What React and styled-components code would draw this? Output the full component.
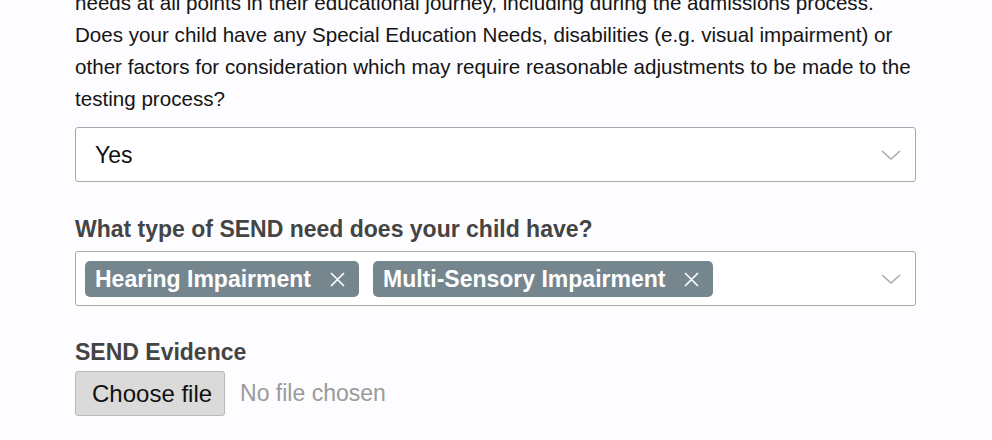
import React from "react";
import styled, { createGlobalStyle } from "styled-components";

const Global = createGlobalStyle`
  html, body {
    margin: 0;
    padding: 0;
    background: #fdfcfe;
    overflow: hidden;
  }
  body {
    font-family: "Liberation Sans", Arial, sans-serif;
    color: #111;
  }
`;

const Form = styled.div`
  width: 841px;
  margin-left: 75px;
  margin-top: -13px;
  display: flex;
  flex-direction: column;
`;

const Intro = styled.p`
  margin: 0;
  font-size: 20.6px;
  line-height: 32px;
  color: #151515;
  white-space: nowrap;
`;

const Field = styled.div`
  margin-top: ${(p) => p.$gap || 0}px;
  display: flex;
  flex-direction: column;
`;

const Label = styled.div`
  font-size: 23px;
  font-weight: bold;
  line-height: 28px;
  color: #444;
  margin-bottom: ${(p) => p.$space || 8}px;
`;

const Box = styled.div`
  height: 55px;
  box-sizing: border-box;
  border: 1px solid #a9a9ab;
  border-radius: 3px;
  background: #fff;
  display: flex;
  align-items: center;
  padding: 1px 14px 0 ${(p) => (p.$chips ? 9 : 19)}px;
  gap: 13px;
`;

const Value = styled.span`
  flex: 1;
  font-size: 23px;
  color: #111;
`;

const Chips = styled.div`
  flex: 1;
  display: flex;
  gap: 14px;
`;

const Chip = styled.span`
  height: 36px;
  display: inline-flex;
  align-items: center;
  background: #76868f;
  color: #fff;
  border-radius: 5px;
  padding: 1px 14px 0 10px;
  box-sizing: border-box;
  font-size: 23px;
  font-weight: bold;
  gap: 19px;
`;

const Chevron = () => (
  <svg width="20" height="10" viewBox="0 0 20 10" fill="none">
    <path d="M1 1l9 8 9-8" stroke="#a8a8ad" strokeWidth="1.5" />
  </svg>
);

const Cross = () => (
  <svg width="15" height="15" viewBox="0 0 15 15" fill="none">
    <path d="M1 1l13 13M14 1L1 14" stroke="#fff" strokeWidth="1.6" />
  </svg>
);

const FileRow = styled.div`
  display: flex;
  align-items: center;
  gap: 15px;
`;

const FileButton = styled.button`
  height: 45px;
  padding: 0 12px 0 16px;
  background: #dadada;
  border: 1px solid #b8b8b8;
  border-radius: 3px;
  font-family: "Liberation Sans", Arial, sans-serif;
  font-size: 24px;
  color: #111;
`;

const NoFile = styled.span`
  font-size: 23px;
  color: #9a9a9a;
`;

export default function App() {
  return (
    <>
      <Global />
      <Form>
        <Intro>
          needs at all points in their educational journey, including during
          the admissions process.
          <br />
          Does your child have any Special Education Needs, disabilities (e.g.
          visual impairment) or
          <br />
          other factors for consideration which may require reasonable
          adjustments to be made to the
          <br />
          testing process?
        </Intro>
        <Field $gap={12}>
          <Box>
            <Value>Yes</Value>
            <Chevron />
          </Box>
        </Field>
        <Field $gap={33}>
          <Label>What type of SEND need does your child have?</Label>
          <Box $chips>
            <Chips>
              <Chip>
                Hearing Impairment <Cross />
              </Chip>
              <Chip>
                Multi-Sensory Impairment <Cross />
              </Chip>
            </Chips>
            <Chevron />
          </Box>
        </Field>
        <Field $gap={32}>
          <Label $space={5}>SEND Evidence</Label>
          <FileRow>
            <FileButton>Choose file</FileButton>
            <NoFile>No file chosen</NoFile>
          </FileRow>
        </Field>
      </Form>
    </>
  );
}
